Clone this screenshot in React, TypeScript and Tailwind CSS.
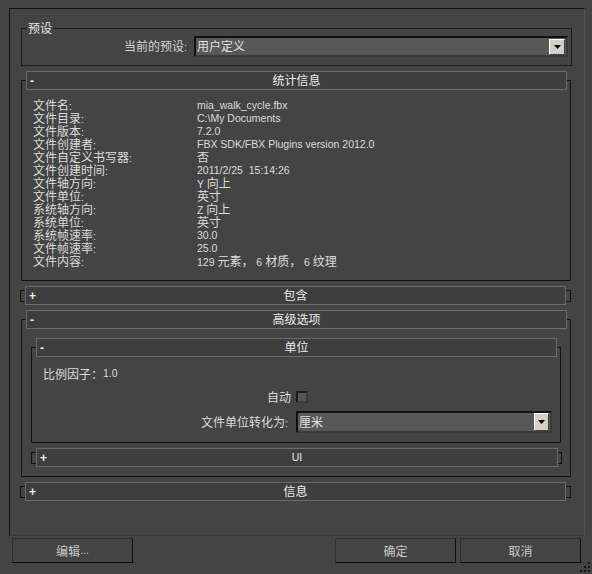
import type { ReactNode } from 'react';

const CJK = /([\u2E80-\u9FFF\u3000-\u303F\uFF00-\uFFEF]+)/;

// CJK runs get 12px glyphs, latin runs stay at the 10.5px base size
function Txt({ s }: { s: string }) {
    return (
        <>
            {s.split(CJK).map((part, i) =>
                CJK.test(part) ? (
                    <span key={i} className="text-[12px] leading-none font-['Noto_Sans_CJK_SC',sans-serif]">{part}</span>
                ) : (
                    <span key={i}>{part}</span>
                )
            )}
        </>
    );
}

const stats: [string, string][] = [
    ['文件名:', 'mia_walk_cycle.fbx'],
    ['文件目录:', 'C:\\My Documents'],
    ['文件版本:', '7.2.0'],
    ['文件创建者:', 'FBX SDK/FBX Plugins version 2012.0'],
    ['文件自定义书写器:', '否'],
    ['文件创建时间:', '2011/2/25  15:14:26'],
    ['文件轴方向:', 'Y 向上'],
    ['文件单位:', '英寸'],
    ['系统轴方向:', 'Z 向上'],
    ['系统单位:', '英寸'],
    ['系统帧速率:', '30.0'],
    ['文件帧速率:', '25.0'],
    ['文件内容:', '129 元素， 6 材质， 6 纹理'],
];

function Arrow() {
    return (
        <svg width="7" height="4" viewBox="0 0 7 4">
            <path d="M0 0H7L3.5 4Z" fill="#000" />
        </svg>
    );
}

function Dropdown({ value, className, btn }: { value: string; className: string; btn: string }) {
    return (
        <div className={`flex items-center border-2 border-t-[#111] border-l-[#111] border-r-[#3a3a3a] border-b-[#3a3a3a] bg-[#585858] ${className}`}>
            <div className="flex-1 pl-[1px] text-[#e2e2e2] leading-none">
                <Txt s={value} />
            </div>
            <div className={`flex items-center justify-center bg-[#d4d0c8] border border-t-white border-l-white border-r-[#404040] border-b-[#404040] ${btn}`}>
                <Arrow />
            </div>
        </div>
    );
}

function Header({ title, sign, className }: { title: string; sign: string; className: string }) {
    return (
        <div className={`grid grid-cols-[20px_1fr_20px] items-center h-[19px] border border-[#6b6b6b] bg-[#3e3e3e] text-[#ececec] ${className}`}>
            <span className="pl-[3px] text-[12px] font-bold leading-none">{sign}</span>
            <span className="text-center leading-none"><Txt s={title} /></span>
            <span />
        </div>
    );
}

function Collapsed({ title, className, width }: { title: string; className: string; width: string }) {
    return (
        <div className={`grid h-[19px] ${className}`}>
            <div className="[grid-area:1/1] self-center h-[12px] border border-[#111]" />
            <Header title={title} sign="+" className={`[grid-area:1/1] ml-[5px] ${width}`} />
        </div>
    );
}

function Button({ children, className }: { children: ReactNode; className: string }) {
    return (
        <div className={`flex items-center justify-center w-[121px] h-[25px] border border-t-[#303030] border-l-[#303030] border-r-[#0c0c0c] border-b-[#0c0c0c] text-[#c8c8c8] leading-none ${className}`}>
            {children}
        </div>
    );
}

export default function App() {
    return (
        <div className="relative w-[592px] h-[574px] bg-[#444] pt-[8px] text-[10.5px] text-[#dcdcdc] font-['Liberation_Sans','Noto_Sans_CJK_SC',sans-serif]">
            <div className="ml-[9px] w-[576px] h-[528px] border border-t-[#111] border-l-[#111] border-r-[#555] border-b-[#3a3a3a]">
                {/* preset group */}
                <div className="relative ml-[11px] mt-[19px] w-[551px] h-[38px] border border-[#1a1a1a]">
                    <span className="absolute left-[5px] -top-[7px] px-[1px] bg-[#444] leading-[12px] text-[#e6e6e6]">
                        <Txt s="预设" />
                    </span>
                    <div className="flex items-center justify-end pt-[7px] pr-[3px]">
                        <span className="mr-[7px] text-[#d4d4d4] leading-none"><Txt s="当前的预设:" /></span>
                        <Dropdown value="用户定义" className="w-[374px] h-[21px]" btn="w-[16px] h-[16px] mr-[1px]" />
                    </div>
                </div>

                {/* statistics */}
                <div className="ml-[11px] mt-[14px] w-[550px] h-[201px] border border-[#111]">
                    <Header title="统计信息" sign="-" className="-mt-[10px] ml-[4px] w-[541px]" />
                    <div className="grid grid-cols-[164px_1fr] auto-rows-[13px] items-center pl-[11px] pt-[9px] leading-none whitespace-pre">
                        {stats.map(([k, v]) => (
                            <div key={k} className="contents">
                                <span><Txt s={k} /></span>
                                <span><Txt s={v} /></span>
                            </div>
                        ))}
                    </div>
                </div>

                <Collapsed title="包含" className="ml-[10px] mt-[5px] w-[551px]" width="w-[541px]" />

                {/* advanced options */}
                <div className="ml-[11px] mt-[5px] pt-[9px]">
                    <div className="w-[550px] h-[158px] border border-[#111]">
                        <Header title="高级选项" sign="-" className="-mt-[10px] ml-[4px] w-[541px]" />
                        <div className="ml-[9px] mt-[18px] w-[530px] h-[96px] border border-[#111]">
                            <Header title="单位" sign="-" className="-mt-[10px] ml-[4px] w-[521px]" />
                            <div className="pl-[11px] pt-[10px]">
                                <div className="flex items-center h-[13px] leading-none"><Txt s="比例因子：1.0" /></div>
                                <div className="flex items-center mt-[11px] h-[12px]">
                                    <span className="w-[248px] text-right leading-none"><Txt s="自动" /></span>
                                    <div className="ml-[5px] w-[12px] h-[12px] border-2 border-t-[#1a1a1a] border-l-[#1a1a1a] border-r-[#3a3a3a] border-b-[#3a3a3a] bg-[#575757]" />
                                </div>
                                <div className="flex items-center mt-[8px] h-[22px]">
                                    <span className="w-[248px] pr-[3px] text-right leading-none"><Txt s="文件单位转化为:" /></span>
                                    <Dropdown value="厘米" className="ml-[5px] w-[256px] h-[22px]" btn="w-[15px] h-[18px] mr-[1px]" />
                                </div>
                            </div>
                        </div>
                        <Collapsed title="UI" className="ml-[9px] mt-[5px] w-[531px]" width="w-[522px]" />
                    </div>
                </div>

                <Collapsed title="信息" className="ml-[10px] mt-[5px] w-[551px]" width="w-[541px]" />
            </div>

            <div className="flex mt-[2px] pl-[12px]">
                <Button className=""><Txt s="编辑..." /></Button>
                <Button className="ml-[202px]"><Txt s="确定" /></Button>
                <Button className="ml-[4px]"><Txt s="取消" /></Button>
            </div>

            <svg className="absolute right-[1px] bottom-[1px]" width="11" height="11" viewBox="0 0 11 11">
                <rect x="8" y="0" width="2" height="2" fill="#111" />
                <rect x="4" y="4" width="2" height="2" fill="#111" />
                <rect x="8" y="4" width="2" height="2" fill="#111" />
                <rect x="0" y="8" width="2" height="2" fill="#111" />
                <rect x="4" y="8" width="2" height="2" fill="#111" />
                <rect x="8" y="8" width="2" height="2" fill="#111" />
            </svg>
        </div>
    );
}
